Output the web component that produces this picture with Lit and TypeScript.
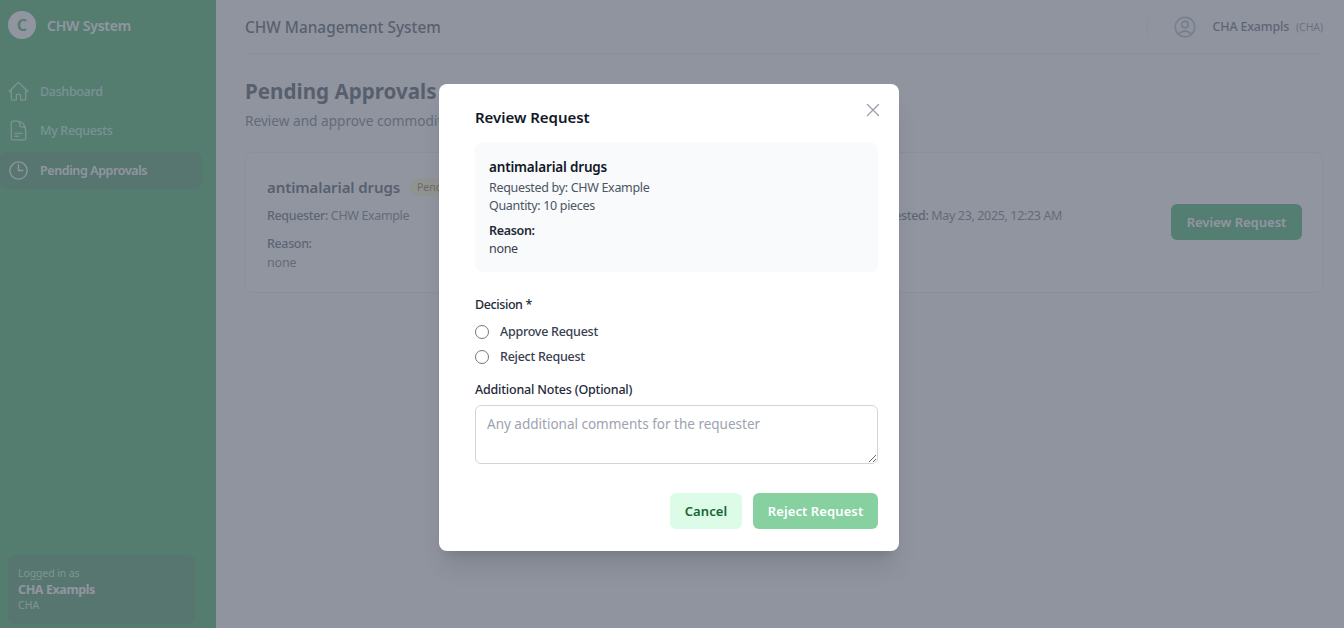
import { LitElement, html, css } from "lit";
import { customElement } from "lit/decorators.js";

@customElement("app-root")
export class AppRoot extends LitElement {
  static styles = css`
    :host { display: block; height: 628px; position: relative; overflow: hidden; background: #f9fafb; font-family: "Noto Sans", "Open Sans", sans-serif; color: #111827; }
    * { box-sizing: border-box; }
    .app { display: flex; height: 628px; }
    .side { width: 216px; flex: none; background: #10a03c; display: flex; flex-direction: column; padding: 11px 0 0 0; color: #fff; }
    .brand { display: flex; align-items: center; gap: 11px; padding-left: 8px; height: 28px; }
    .logo { width: 28px; height: 28px; border-radius: 50%; background: #fff; color: #10a03c; font-weight: 700; font-size: 16px; display: flex; align-items: center; justify-content: center; }
    .brand b { font-size: 14px; font-weight: 600; letter-spacing: -.2px; }
    nav { display: flex; flex-direction: column; margin-top: 33.7px; gap: 2.5px; padding-right: 14px; }
    .item { display: flex; align-items: center; gap: 10px; height: 37px; padding-left: 7px; border-radius: 6px; font-size: 12.5px; font-weight: 500; color: #a7f3d0; letter-spacing: -.33px; }
    .item svg { width: 23px; height: 23px; flex: none; fill: none; stroke: currentColor; stroke-width: 1.4; stroke-linecap: round; stroke-linejoin: round; }
    .item.active { background: rgba(60,70,70,.3); color: #fff; font-weight: 600; letter-spacing: -.4px; }
    .foot { margin: auto 21px 4px 8px; height: 69px; border-radius: 6px; background: rgba(60,70,70,.3); padding: 10px 10px; display: flex; flex-direction: column; font-size: 10.5px; color: #bbf7d0; line-height: 16px; }
    .foot span:first-child { letter-spacing: -.1px; }
    .foot b { font-size: 12.5px; font-weight: 700; color: #fff; letter-spacing: -.4px; margin: 1px 0 -1px; }
    main { flex: 1; min-width: 0; padding: 0 21px 0 29px; }
    header { height: 54px; border-bottom: 1px solid #e5e7eb; display: flex; align-items: center; }
    header h2 { margin: 2px 0 0; font-size: 15.4px; font-weight: 500; color: #1f2937; flex: 1; }
    .sep { width: 1px; height: 20px; background: #e5e7eb; }
    .avatar { width: 26px; height: 26px; margin: 0 15px 0 24px; color: #9ca3af; fill: none; stroke: currentColor; stroke-width: 1.5; stroke-linecap: round; stroke-linejoin: round; }
    .uname { font-size: 12.5px; font-weight: 500; color: #374151; letter-spacing: -.2px; }
    .urole { font-size: 10.5px; color: #6b7280; margin: 0 0 0 7px; letter-spacing: -.1px; }
    h1 { margin: 23px 0 0; font-size: 20.6px; line-height: 29px; font-weight: 700; color: #1f2937; }
    .sub { margin: 5px 0 0; font-size: 13.65px; line-height: 19px; color: #4b5563; }
    .card { margin-top: 22px; height: 141px; background: #fff; border: 1px solid #e5e7eb; border-radius: 8px; padding: 24px 20px 0 21px; display: flex; align-items: center; }
    .cmain { flex: 1; min-width: 0; align-self: flex-start; }
    .ctitle { display: flex; align-items: center; gap: 9px; }
    .ctitle b { font-size: 15px; font-weight: 600; color: #1f2937; letter-spacing: -.1px; }
    .badge { font-size: 10.5px; line-height: 18px; padding: 0 8px; border-radius: 9px; background: #fef9c3; color: #854d0e; }
    .cols { display: grid; grid-template-columns: repeat(3, 299px); margin-top: 10px; font-size: 12.5px; line-height: 18px; color: #4b5563; letter-spacing: -.36px; }
    .cols strong, .lab { font-weight: 500; color: #374151; }
    .lab { font-size: 12.5px; line-height: 18px; margin-top: 10px; letter-spacing: -.36px; }
    .val { font-size: 12.5px; line-height: 18px; color: #4b5563; margin-top: 1px; letter-spacing: -.15px; }
    .rbtn { flex: none; width: 131px; height: 36px; margin-top: -26px; border: 0; border-radius: 6px; background: #16a34a; color: #fff; font: 600 13px "Noto Sans", sans-serif; }
    .overlay { position: absolute; inset: 0; background: rgba(107,114,128,.75); display: flex; justify-content: center; align-items: flex-start; padding: 84px 6px 0 0; }
    .modal { position: relative; width: 460px; height: 467px; background: #fff; border-radius: 8px; padding: 23px 21px 0 36px; box-shadow: 0 20px 25px -5px rgba(0,0,0,.1), 0 8px 10px -6px rgba(0,0,0,.1); }
    .modal h3 { margin: 0; font-size: 15px; line-height: 20px; font-weight: 600; color: #111827; letter-spacing: -.03px; }
    .close { position: absolute; top: 18px; right: 18px; width: 16px; height: 16px; fill: none; stroke: #9ca3af; stroke-width: 1.4; stroke-linecap: round; }
    .info { margin-top: 15px; height: 130px; border-radius: 8px; background: #f9fafb; padding: 16px 14px 0; font-size: 12.5px; line-height: 18px; color: #4b5563; letter-spacing: -.32px; }
    .info b { display: block; font-size: 13.5px; font-weight: 600; color: #111827; letter-spacing: -.18px; margin-bottom: 3px; }
    .info .r { font-weight: 600; color: #1f2937; margin-top: 7px; }
    .info .n { color: #374151; }
    label, .lbl { font-size: 12.5px; line-height: 18px; font-weight: 500; color: #1f2937; letter-spacing: -.2px; }
    .lbl { display: block; }
    .dec { margin-top: 24px; }
    .dec .lbl { letter-spacing: -.4px; }
    .radios { display: flex; flex-direction: column; gap: 7px; margin-top: 9px; }
    .radios label { display: flex; align-items: center; gap: 11px; color: #374151; letter-spacing: -.26px; }
    .radios input { width: 14px; height: 14px; margin: 0; accent-color: #16a34a; }
    .notes { margin-top: 15px; }
    textarea { display: block; width: 403px; height: 59px; margin-top: 6px; border: 1px solid #d1d5db; border-radius: 6px; padding: 9px 11px; font: 13.5px/18px "Noto Sans", sans-serif; outline: 0; }
    textarea::placeholder { color: #9ca3af; opacity: 1; }
    .btns { display: flex; justify-content: flex-end; gap: 11px; margin-top: 29px; }
    .btns button { height: 36px; border: 0; border-radius: 6px; font: 600 13px "Noto Sans", sans-serif; letter-spacing: .1px; }
    .cancel { width: 72px; background: #dcfce7; color: #166534; }
    .reject { width: 125px; background: #86d19f; color: #fff; }
  `;

  render() {
    return html`
      <div class="app">
        <aside class="side">
          <div class="brand"><span class="logo">C</span><b>CHW System</b></div>
          <nav>
            <div class="item"><svg viewBox="0 0 24 24"><path d="M2.25 12l8.95-8.95a1.13 1.13 0 011.6 0L21.75 12M4.5 9.75v10.13c0 .62.5 1.12 1.13 1.12H9.75v-4.88c0-.62.5-1.12 1.13-1.12h2.25c.62 0 1.12.5 1.12 1.12V21h4.13c.62 0 1.12-.5 1.12-1.12V9.75"/></svg>Dashboard</div>
            <div class="item"><svg viewBox="0 0 24 24"><path d="M19.5 14.25v-2.63a3.38 3.38 0 00-3.38-3.37h-1.5A1.13 1.13 0 0113.5 7.13v-1.5a3.38 3.38 0 00-3.38-3.38H8.25m0 12.75h7.5m-7.5 3H12M10.5 2.25H5.63c-.62 0-1.13.5-1.13 1.13v17.25c0 .62.5 1.12 1.13 1.12h12.75c.62 0 1.12-.5 1.12-1.12V11.25a9 9 0 00-9-9z"/></svg>My Requests</div>
            <div class="item active"><svg viewBox="0 0 24 24"><path d="M12 6v6h4.5m4.5 0a9 9 0 11-18 0 9 9 0 0118 0z"/></svg>Pending Approvals</div>
          </nav>
          <div class="foot"><span>Logged in as</span><b>CHA Exampls</b><span>CHA</span></div>
        </aside>
        <main>
          <header>
            <h2>CHW Management System</h2>
            <span class="sep"></span>
            <svg class="avatar" viewBox="0 0 24 24"><path d="M17.98 18.73A7.49 7.49 0 0012 15.75a7.49 7.49 0 00-5.98 2.98m11.96 0a9 9 0 10-11.96 0m11.96 0A8.97 8.97 0 0112 21a8.97 8.97 0 01-5.98-2.27M15 9.75a3 3 0 11-6 0 3 3 0 016 0z"/></svg>
            <span class="uname">CHA Exampls</span><span class="urole">(CHA)</span>
          </header>
          <h1>Pending Approvals</h1>
          <p class="sub">Review and approve commodity requests from CHWs</p>
          <section class="card">
            <div class="cmain">
              <div class="ctitle"><b>antimalarial drugs</b><span class="badge">Pending</span></div>
              <div class="cols">
                <span><strong>Requester:</strong> CHW Example</span>
                <span><strong>Quantity:</strong> 10 pieces</span>
                <span><strong>Requested:</strong> May 23, 2025, 12:23 AM</span>
              </div>
              <div class="lab">Reason:</div>
              <div class="val">none</div>
            </div>
            <button class="rbtn">Review Request</button>
          </section>
        </main>
      </div>
      <div class="overlay">
        <div class="modal">
          <h3>Review Request</h3>
          <svg class="close" viewBox="0 0 16 16"><path d="M2.5 2.5l11 11M13.5 2.5l-11 11"/></svg>
          <div class="info">
            <b>antimalarial drugs</b>
            <div>Requested by: CHW Example</div>
            <div>Quantity: 10 pieces</div>
            <div class="r">Reason:</div>
            <div class="n">none</div>
          </div>
          <div class="dec">
            <span class="lbl">Decision *</span>
            <div class="radios">
              <label><input type="radio" name="d" />Approve Request</label>
              <label><input type="radio" name="d" />Reject Request</label>
            </div>
          </div>
          <div class="notes">
            <span class="lbl">Additional Notes (Optional)</span>
            <textarea placeholder="Any additional comments for the requester"></textarea>
          </div>
          <div class="btns">
            <button class="cancel">Cancel</button>
            <button class="reject">Reject Request</button>
          </div>
        </div>
      </div>
    `;
  }
}
